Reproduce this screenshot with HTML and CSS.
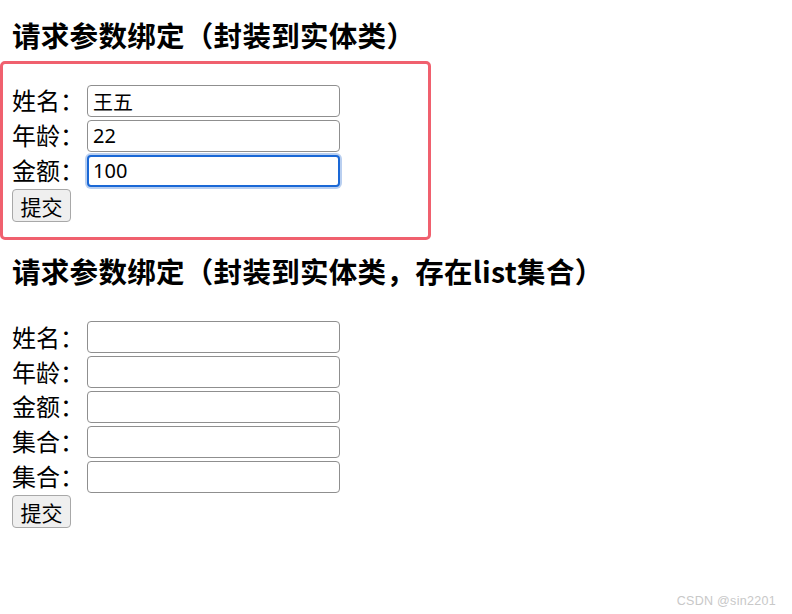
FILE: index.html
```html
<!DOCTYPE html>
<html lang="zh-CN">
<head>
<meta charset="utf-8">
<title>请求参数绑定</title>
<link rel="stylesheet" href="styles.css">
</head>
<body>
<h2 class="title title-first">请求参数绑定（封装到实体类）</h2>
<div class="highlight">
  <form class="form">
    <div class="row"><span class="label">姓名：</span><input class="field" type="text" value="王五"></div>
    <div class="row"><span class="label">年龄：</span><input class="field" type="text" value="22"></div>
    <div class="row"><span class="label">金额：</span><input class="field field-focus" type="text" value="100"></div>
    <div class="row-btn"><button class="btn" type="button">提交</button></div>
  </form>
</div>
<h2 class="title title-second">请求参数绑定（封装到实体类，存在list集合）</h2>
<form class="form form-second">
  <div class="row"><span class="label">姓名：</span><input class="field" type="text"></div>
  <div class="row"><span class="label">年龄：</span><input class="field" type="text"></div>
  <div class="row"><span class="label">金额：</span><input class="field" type="text"></div>
  <div class="row"><span class="label">集合：</span><input class="field" type="text"></div>
  <div class="row"><span class="label">集合：</span><input class="field" type="text"></div>
  <div class="row-btn"><button class="btn" type="button">提交</button></div>
</form>
<div class="watermark">CSDN @sin2201</div>
</body>
</html>
```
FILE: styles.css
```css
html, body {
  margin: 0;
  padding: 0;
  background: #ffffff;
}
body {
  position: relative;
  width: 792px;
  height: 614px;
  overflow: hidden;
  font-family: "Noto Sans CJK SC", "Noto Sans", sans-serif;
  color: #000;
}
.title {
  margin: 0 0 0 12px;
  font-size: 28.5px;
  line-height: 36px;
  font-weight: 700;
  letter-spacing: 0.3px;
  white-space: nowrap;
}
.title-first {
  padding-top: 17px;
}
.highlight {
  margin-top: 8px;
  width: 416px;
  border: 3px solid #f0606e;
  border-radius: 5px;
  padding: 21px 0 15px 9px;
}
.title-second {
  margin-top: 13px;
}
.form {
  display: flex;
  flex-direction: column;
}
.form-second {
  margin: 32px 0 0 12px;
}
.row {
  display: flex;
  align-items: center;
  height: 34.8px;
}
.label {
  width: 75px;
  font-size: 24px;
  line-height: 32px;
  margin-top: -4px;
  white-space: nowrap;
}
.field {
  box-sizing: border-box;
  width: 253px;
  height: 32px;
  margin: 0 0 2.8px 0;
  border: 1px solid #8f8f8f;
  border-radius: 4px;
  padding: 0 5px;
  font-family: "Noto Sans", "Noto Sans CJK SC", sans-serif;
  font-size: 20px;
  color: #000;
  background: #fff;
  outline: none;
}
.field-focus {
  border: 2px solid #1a68d6;
  padding: 0 4px;
  box-shadow: 0 0 0 2px #b9cff0;
}
.row-btn {
  display: flex;
}
.btn {
  box-sizing: border-box;
  width: 59px;
  height: 33px;
  padding: 0;
  border: 1px solid #a8a8a8;
  border-radius: 4px;
  background: #efefef;
  font-family: "Noto Sans CJK SC", sans-serif;
  font-size: 21px;
  line-height: 30px;
  color: #000;
}
.watermark {
  position: absolute;
  right: 16px;
  bottom: 6px;
  font-family: "Liberation Sans", sans-serif;
  font-size: 12.5px;
  color: #c8c8c8;
  letter-spacing: 0.3px;
}
```
